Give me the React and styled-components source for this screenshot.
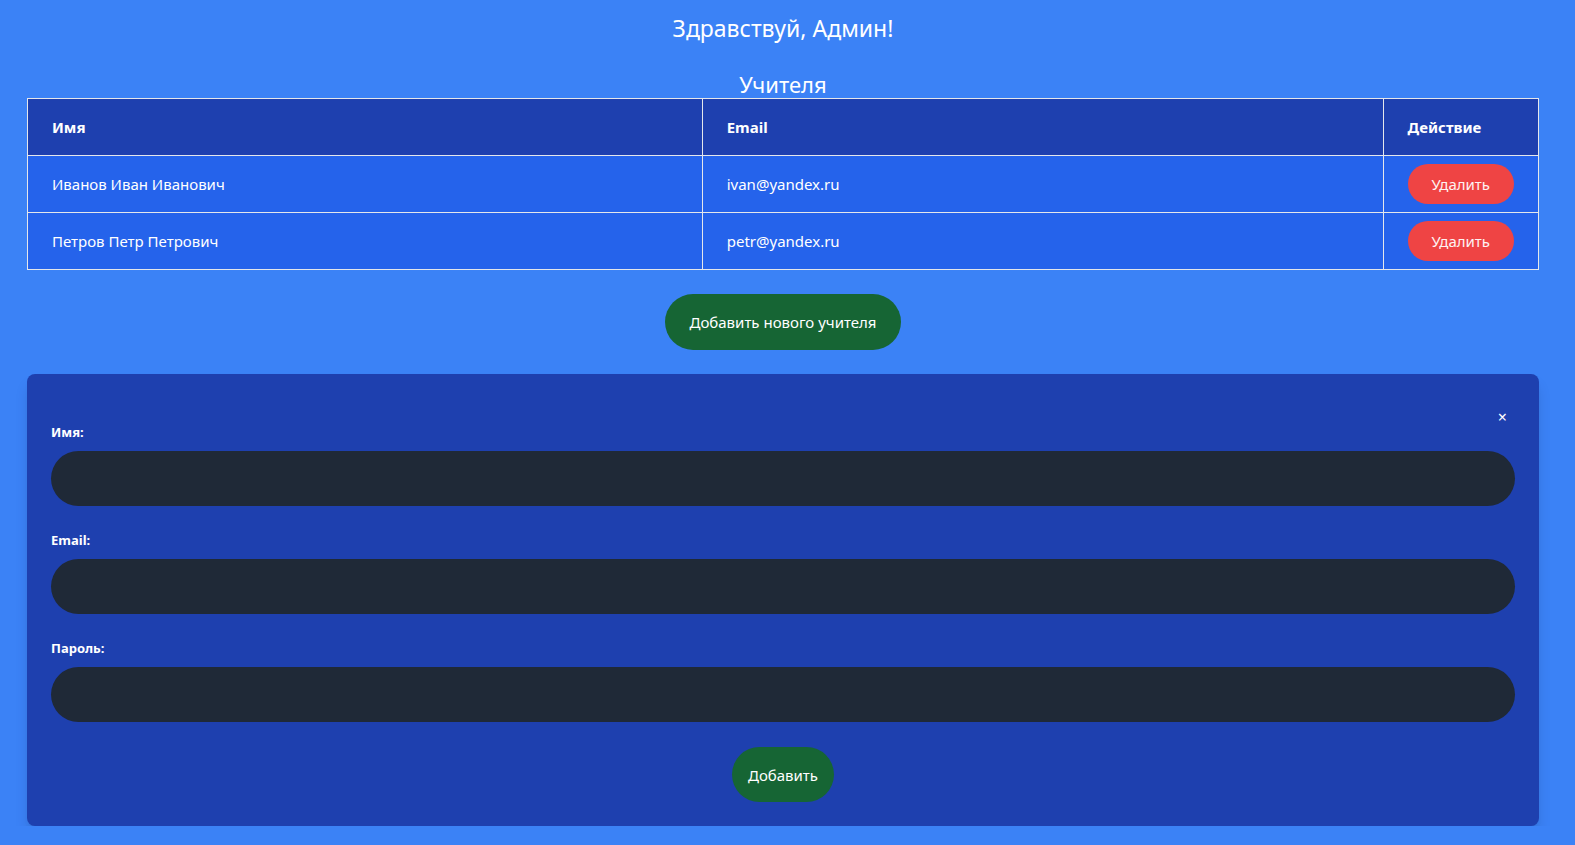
import React from 'react';
import styled, { createGlobalStyle } from 'styled-components';

const GlobalStyle = createGlobalStyle`
  html, body {
    margin: 0;
    padding: 0;
    background: #3b82f6;
    font-family: 'Segoe UI', 'Noto Sans', 'Open Sans', sans-serif;
    color: #ffffff;
  }
  * { box-sizing: border-box; }
`;

const teachers = [
  { id: 1, name: 'Иванов Иван Иванович', email: 'ivan@yandex.ru' },
  { id: 2, name: 'Петров Петр Петрович', email: 'petr@yandex.ru' },
];

const fields = [
  { id: 'name', label: 'Имя:', type: 'text' },
  { id: 'email', label: 'Email:', type: 'email' },
  { id: 'password', label: 'Пароль:', type: 'password' },
];

const App = () => {
  return (
    <>
      <GlobalStyle />
      <Page>
        <Greeting>Здравствуй, Админ!</Greeting>
        <SectionTitle>Учителя</SectionTitle>
        <Table>
          <thead>
            <tr>
              <Th width="44.7%">Имя</Th>
              <Th width="45.1%">Email</Th>
              <Th>Действие</Th>
            </tr>
          </thead>
          <tbody>
            {teachers.map((t) => (
              <tr key={t.id}>
                <Td>{t.name}</Td>
                <Td>{t.email}</Td>
                <ActionTd>
                  <DeleteButton>Удалить</DeleteButton>
                </ActionTd>
              </tr>
            ))}
          </tbody>
        </Table>
        <Center>
          <GreenButton $wide>Добавить нового учителя</GreenButton>
        </Center>
        <FormPanel>
          <CloseRow>
            <CloseButton>×</CloseButton>
          </CloseRow>
          {fields.map((f) => (
            <Field key={f.id}>
              <Label htmlFor={f.id}>{f.label}</Label>
              <Input id={f.id} type={f.type} />
            </Field>
          ))}
          <Center>
            <GreenButton>Добавить</GreenButton>
          </Center>
        </FormPanel>
      </Page>
    </>
  );
};

const Page = styled.div`
  width: 1512px;
  margin-left: 27px;
  padding-top: 12px;
`;

const Greeting = styled.h1`
  margin: 0;
  font-size: 23px;
  line-height: 32px;
  font-weight: 400;
  text-align: center;
`;

const SectionTitle = styled.h2`
  margin: 26px 0 0;
  font-size: 22px;
  line-height: 28px;
  font-weight: 400;
  text-align: center;
`;

const Table = styled.table`
  width: 100%;
  border-collapse: collapse;
  border: 1px solid #e5e7eb;
`;

const Th = styled.th`
  width: ${(p) => p.width || 'auto'};
  background: #1e40af;
  border: 1px solid #e5e7eb;
  padding: 18px 24px;
  text-align: left;
  font-size: 15px;
  line-height: 20px;
  font-weight: 700;
`;

const Td = styled.td`
  background: #2563eb;
  border: 1px solid #e5e7eb;
  padding: 18px 24px;
  font-size: 15px;
  line-height: 20px;
`;

const ActionTd = styled(Td)`
  padding: 8px 24px;
`;

const DeleteButton = styled.button`
  height: 40px;
  padding: 0 24px;
  border: none;
  border-radius: 9999px;
  background: #ef4444;
  color: #fef2f2;
  font-family: inherit;
  font-size: 15px;
  cursor: pointer;
`;

const Center = styled.div`
  display: flex;
  justify-content: center;
`;

const GreenButton = styled.button`
  height: ${(p) => (p.$wide ? '56px' : '55px')};
  margin-top: ${(p) => (p.$wide ? '24px' : '1px')};
  padding: 0 ${(p) => (p.$wide ? '24px' : '16px')};
  border: none;
  border-radius: 9999px;
  background: #166534;
  color: #ffffff;
  font-family: inherit;
  font-size: 15px;
  cursor: pointer;
`;

const FormPanel = styled.div`
  margin-top: 24px;
  padding: 24px;
  background: #1e40af;
  border-radius: 8px;
  box-shadow: 0 10px 15px -3px rgba(0, 0, 0, 0.15), 0 4px 6px -4px rgba(0, 0, 0, 0.15);
`;

const CloseRow = styled.div`
  display: flex;
  justify-content: flex-end;
  align-items: flex-end;
  height: 24px;
  padding-right: 8px;
`;

const CloseButton = styled.button`
  background: none;
  border: none;
  padding: 0;
  margin-bottom: -3px;
  color: #ffffff;
  font-family: inherit;
  font-size: 16px;
  line-height: 16px;
  cursor: pointer;
`;

const Field = styled.div`
  margin-bottom: 24px;
`;

const Label = styled.label`
  display: block;
  margin-bottom: 9px;
  font-size: 13px;
  line-height: 20px;
  font-weight: 700;
`;

const Input = styled.input`
  display: block;
  width: 100%;
  height: 55px;
  padding: 0 24px;
  border: none;
  border-radius: 9999px;
  background: #1f2937;
  color: #ffffff;
  font-family: inherit;
  font-size: 15px;
  outline: none;
`;

export default App;
